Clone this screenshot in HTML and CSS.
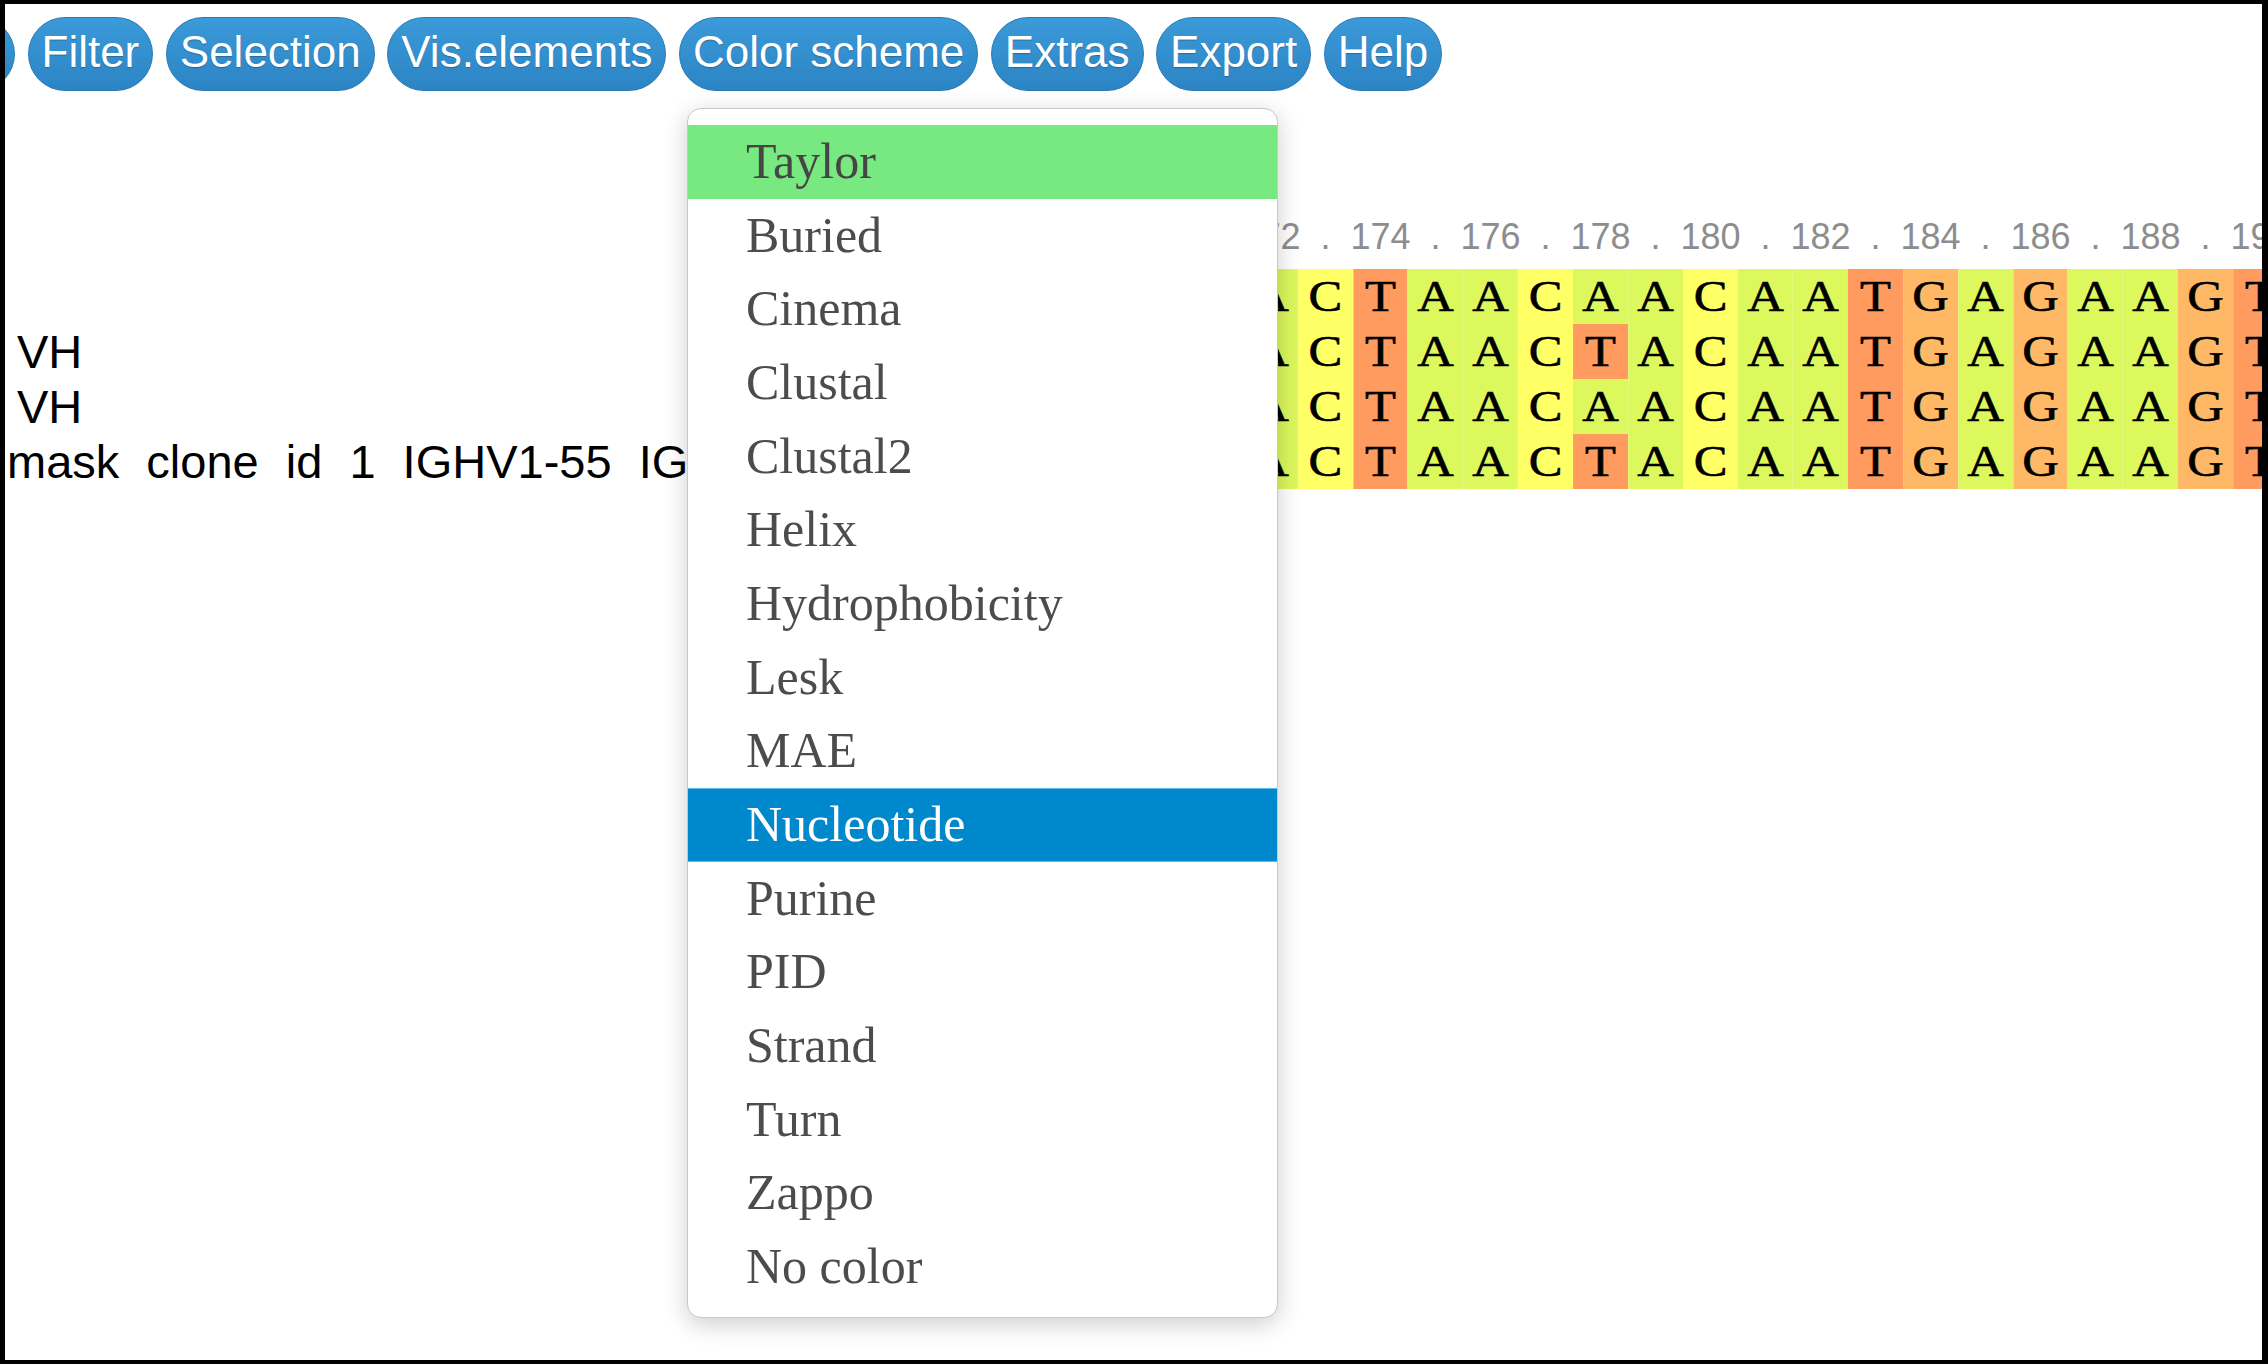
FILE: index.html
```html
<!DOCTYPE html>
<html>
<head>
<meta charset="utf-8">
<link rel="stylesheet" href="styles.css">
</head>
<body>
<div class="frame">
  <div class="toolbar">
    <span class="btn btn-cut">Ordering</span>
    <span class="btn">Filter</span>
    <span class="btn">Selection</span>
    <span class="btn">Vis.elements</span>
    <span class="btn">Color scheme</span>
    <span class="btn">Extras</span>
    <span class="btn">Export</span>
    <span class="btn">Help</span>
  </div>

  <div class="msa">
    <div class="labels">
      <div class="lab-head"></div>
      <div class="lab"></div>
      <div class="lab lab-vh">VH</div>
      <div class="lab lab-vh">VH</div>
      <div class="lab lab-mask">mask clone id 1 IGHV1-55 IGHD3-10 IGHJ4</div>
    </div>
    <div class="seqs">
      <div class="ruler">
        <span>172</span><span>.</span><span>174</span><span>.</span><span>176</span><span>.</span><span>178</span><span>.</span><span>180</span><span>.</span><span>182</span><span>.</span><span>184</span><span>.</span><span>186</span><span>.</span><span>188</span><span>.</span><span>190</span>
      </div>
      <div class="seq">
        <span class="a">A</span><span class="c">C</span><span class="t">T</span><span class="a">A</span><span class="a">A</span><span class="c">C</span><span class="a">A</span><span class="a">A</span><span class="c">C</span><span class="a">A</span><span class="a">A</span><span class="t">T</span><span class="g">G</span><span class="a">A</span><span class="g">G</span><span class="a">A</span><span class="a">A</span><span class="g">G</span><span class="t">T</span>
      </div>
      <div class="seq">
        <span class="a">A</span><span class="c">C</span><span class="t">T</span><span class="a">A</span><span class="a">A</span><span class="c">C</span><span class="t">T</span><span class="a">A</span><span class="c">C</span><span class="a">A</span><span class="a">A</span><span class="t">T</span><span class="g">G</span><span class="a">A</span><span class="g">G</span><span class="a">A</span><span class="a">A</span><span class="g">G</span><span class="t">T</span>
      </div>
      <div class="seq">
        <span class="a">A</span><span class="c">C</span><span class="t">T</span><span class="a">A</span><span class="a">A</span><span class="c">C</span><span class="a">A</span><span class="a">A</span><span class="c">C</span><span class="a">A</span><span class="a">A</span><span class="t">T</span><span class="g">G</span><span class="a">A</span><span class="g">G</span><span class="a">A</span><span class="a">A</span><span class="g">G</span><span class="t">T</span>
      </div>
      <div class="seq">
        <span class="a">A</span><span class="c">C</span><span class="t">T</span><span class="a">A</span><span class="a">A</span><span class="c">C</span><span class="t">T</span><span class="a">A</span><span class="c">C</span><span class="a">A</span><span class="a">A</span><span class="t">T</span><span class="g">G</span><span class="a">A</span><span class="g">G</span><span class="a">A</span><span class="a">A</span><span class="g">G</span><span class="t">T</span>
      </div>
    </div>
  </div>

  <ul class="dropdown">
    <li class="item item-hover">Taylor</li>
    <li class="item">Buried</li>
    <li class="item">Cinema</li>
    <li class="item">Clustal</li>
    <li class="item">Clustal2</li>
    <li class="item">Helix</li>
    <li class="item">Hydrophobicity</li>
    <li class="item">Lesk</li>
    <li class="item">MAE</li>
    <li class="item item-active">Nucleotide</li>
    <li class="item">Purine</li>
    <li class="item">PID</li>
    <li class="item">Strand</li>
    <li class="item">Turn</li>
    <li class="item">Zappo</li>
    <li class="item">No color</li>
  </ul>
</div>
</body>
</html>
```

FILE: styles.css
```css
html, body {
  margin: 0;
  padding: 0;
  background: #ffffff;
}

.frame {
  position: relative;
  width: 2268px;
  height: 1364px;
  box-sizing: border-box;
  border-style: solid;
  border-color: #000000;
  border-width: 4px 6px 4px 5px;
  background: #ffffff;
  overflow: hidden;
  font-family: "Liberation Sans", Arial, sans-serif;
}

/* ---------- toolbar ---------- */
.toolbar {
  display: flex;
  gap: 12.5px;
  margin-top: 13px;
  white-space: nowrap;
}

.btn {
  flex: none;
  display: inline-block;
  box-sizing: border-box;
  height: 74px;
  padding: 0 13px 4px;
  line-height: 68px;
  font-size: 44px;
  color: #ffffff;
  text-shadow: 0 1px 1px rgba(0, 0, 0, 0.25);
  background: linear-gradient(#3b9ad9, #2c84c4);
  border: 1px solid #2a79b6;
  border-radius: 37px;
  overflow: hidden;
}

.btn-cut {
  width: 100px;
  margin-left: -90px;
  direction: rtl;
  color: transparent;
  text-shadow: none;
}

/* ---------- alignment ---------- */
.msa {
  display: flex;
  margin-top: 123px;
}

.labels {
  flex: none;
  width: 1238px;
  overflow: hidden;
  white-space: nowrap;
}

.lab-head {
  height: 55px;
}

.lab {
  height: 55px;
  line-height: 55px;
  font-size: 47px;
  color: #000000;
}

.lab-vh {
  padding-left: 12px;
}

.lab-mask {
  padding-left: 2px;
  word-spacing: 14px;
}

.seqs {
  flex: none;
  display: flex;
  flex-direction: column;
}

.ruler {
  display: flex;
  height: 55px;
}

.ruler span {
  flex: none;
  width: 55px;
  height: 46px;
  line-height: 46px;
  font-size: 36px;
  color: #8d8d8d;
  white-space: nowrap;
  display: flex;
  justify-content: center;
}

/* the sequence canvas is drawn slightly stretched horizontally */
.seq {
  display: flex;
  height: 55px;
  transform: scaleX(1.15);
  transform-origin: 0 0;
}

.seq span {
  flex: none;
  width: 47.83px;
  height: 55px;
  display: flex;
  align-items: center;
  justify-content: center;
  font-family: "Liberation Serif", "Times New Roman", serif;
  font-size: 44px;
  color: #000000;
  -webkit-text-stroke: 0.6px #000000;
}

.seq .a { background: #dcf85c; }
.seq .c { background: #ffff66; }
.seq .t { background: #ff9b5e; }
.seq .g { background: #ffb865; }

/* ---------- dropdown ---------- */
.dropdown {
  position: absolute;
  left: 682px;
  top: 104px;
  width: 591px;
  box-sizing: border-box;
  margin: 0;
  padding: 16px 0 13px;
  list-style: none;
  background: #ffffff;
  border: 1px solid #c8c8c8;
  border-radius: 14px;
  box-shadow: 0 6px 24px rgba(0, 0, 0, 0.2);
  font-family: "Liberation Serif", "Times New Roman", serif;
}

.item {
  height: 73.67px;
  line-height: 73.67px;
  padding-left: 58px;
  font-size: 50px;
  color: #4c4c4c;
  white-space: nowrap;
}

.item-hover {
  background: #78e880;
  color: #454545;
}

.item-active {
  background: #0088cc;
  color: #ffffff;
  box-shadow: inset 0 1px 0 #63b6e6, inset 0 -1px 0 #63b6e6;
}
```
